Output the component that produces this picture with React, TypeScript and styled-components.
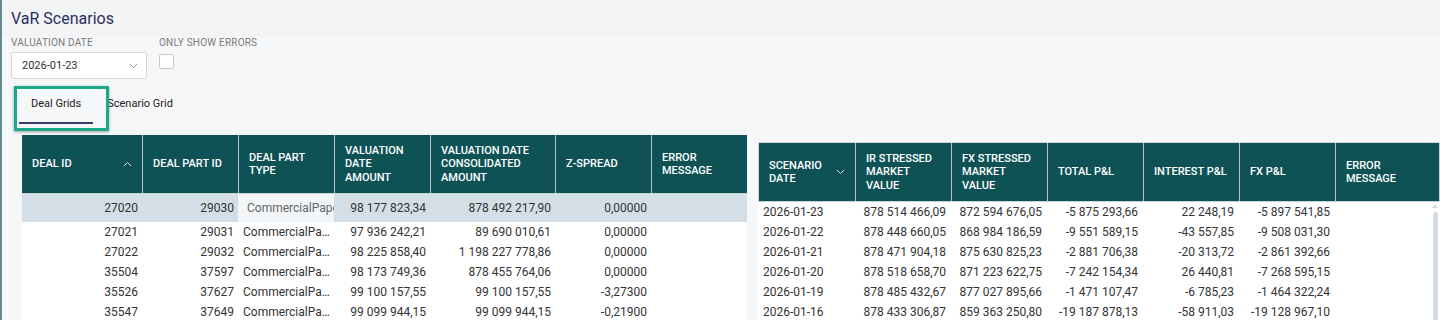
import React from "react";
import styled, { createGlobalStyle } from "styled-components";

const GlobalStyle = createGlobalStyle`
  html, body {
    margin: 0;
    padding: 0;
    height: 100%;
    overflow: hidden;
    background: #f6f7f9;
  }
  body {
    font-family: Roboto, "Liberation Sans", Arial, sans-serif;
    color: #333;
  }
`;

const Page = styled.div`
  min-height: 320px;
  border-left: 2px solid #5e8c91;
  background: #f6f7f9;
  display: flex;
  flex-direction: column;
  & > * {
    flex-shrink: 0;
  }
`;
const TitleBar = styled.div`
  height: 37px;
  background: #f3f4f6;
  padding: 0 9px;
  display: flex;
  align-items: center;
`;
const Title = styled.h1`
  margin: 0;
  font-size: 16px;
  font-weight: 400;
  color: #2c2e5e;
`;
const Filters = styled.div`
  display: flex;
  gap: 12px;
  padding: 1px 9px 0;
`;
const Field = styled.div`
  display: flex;
  flex-direction: column;
  gap: 4px;
`;
const Label = styled.label`
  font-size: 10px;
  line-height: 10px;
  color: #7a7a7a;
  text-transform: uppercase;
  letter-spacing: 0.2px;
`;
const Select = styled.div`
  width: 136px;
  height: 27px;
  box-sizing: border-box;
  background: #fff;
  border: 1px solid #d9d9d9;
  border-radius: 2px;
  display: flex;
  align-items: center;
  justify-content: space-between;
  padding: 0 8px 0 10px;
  font-size: 11px;
  color: #333;
`;
const Checkbox = styled.span`
  width: 15px;
  height: 15px;
  box-sizing: border-box;
  border: 1px solid #c9c9c9;
  border-radius: 2px;
  background: #fff;
  margin-top: 2px;
`;

const TabBar = styled.div`
  position: relative;
  display: flex;
  gap: 2px;
  padding: 10px 0 0 17px;
`;
const Tab = styled.button<{ $active?: boolean }>`
  all: unset;
  font-family: Roboto, "Liberation Sans", Arial, sans-serif;
  font-size: 11px;
  line-height: 13px;
  color: #222;
  padding: 8px 12px 12px;
  border-bottom: 2px solid ${(p) => (p.$active ? "#3a3b6b" : "transparent")};
  cursor: pointer;
`;
const FocusMark = styled.div`
  position: absolute;
  left: 12px;
  top: 7px;
  width: 95px;
  height: 45px;
  box-sizing: border-box;
  border: 3px solid #1ba98a;
  box-shadow: 0 1px 3px rgba(0, 0, 0, 0.35);
  pointer-events: none;
`;

const Grids = styled.div`
  display: flex;
  align-items: flex-start;
  gap: 11px;
  margin-top: 11px;
  padding-left: 20px;
`;
const Grid = styled.div<{ $offset?: number }>`
  display: flex;
  flex-direction: column;
  margin-top: ${(p) => p.$offset ?? 0}px;
`;
const HeaderRow = styled.div<{ $cols: string; $framed?: boolean }>`
  display: grid;
  grid-template-columns: ${(p) => p.$cols};
  height: 59px;
  box-sizing: border-box;
  background: #0e5256;
  border-bottom: 1px solid #c6d2d4;
  ${(p) =>
    p.$framed &&
    `border-top: 1px solid #cfd5da; border-left: 1px solid #cfd5da; border-right: 1px solid #cfd5da; height: 60px;`}
`;
const HeadCell = styled.div<{ $first?: boolean }>`
  display: flex;
  align-items: center;
  justify-content: space-between;
  padding: 0 10px;
  color: #fff;
  font-size: 11px;
  font-weight: 500;
  line-height: 13.5px;
  white-space: pre-line;
  border-left: ${(p) => (p.$first ? "none" : "1px solid #b3c5c7")};
`;
const Body = styled.div`
  display: flex;
  background: #fff;
`;
const Rows = styled.div`
  display: flex;
  flex-direction: column;
`;
const Row = styled.div<{ $cols: string; $selected?: boolean; $tall?: boolean }>`
  display: grid;
  grid-template-columns: ${(p) => p.$cols};
  height: ${(p) => (p.$tall ? 28 : 20)}px;
  background: ${(p) => (p.$selected ? "#d3dee6" : "#fff")};
`;
const Cell = styled.div<{ $align?: "left" | "right" }>`
  align-self: center;
  font-size: 12px;
  line-height: 20px;
  color: #333;
  padding: ${(p) => (p.$align === "right" ? "0 4px 0 2px" : "0 4px 0 5px")};
  text-align: ${(p) => p.$align ?? "left"};
  overflow: hidden;
  white-space: nowrap;
  text-overflow: ellipsis;
`;
const EditCell = styled.div`
  align-self: stretch;
  display: flex;
  align-items: center;
  background: #f3f6f9;
  color: #666;
  font-size: 12px;
  padding-left: 9px;
  overflow: hidden;
  white-space: nowrap;
`;
const ScrollTrack = styled.div`
  width: 10px;
  display: flex;
  flex-direction: column;
  align-items: center;
  padding-top: 2px;
  gap: 4px;
`;
const ScrollArrow = styled.span`
  width: 0;
  height: 0;
  border-left: 3px solid transparent;
  border-right: 3px solid transparent;
  border-bottom: 4px solid #d3dce4;
`;
const ScrollThumb = styled.span`
  width: 5px;
  height: 200px;
  border-radius: 3px;
  background: #d3dce4;
`;

const Chevron = ({ up, color }: { up?: boolean; color: string }) => (
  <svg width="9" height="6" viewBox="0 0 9 6">
    <polyline
      points={up ? "1,5 4.5,1.5 8,5" : "1,1 4.5,4.5 8,1"}
      fill="none"
      stroke={color}
      strokeWidth="1"
    />
  </svg>
);

type Col = { title: string; align: "left" | "right"; sort?: "up" | "down" };

const dealCols = "120px 96px 96px 96px 125px 96px 96px";
const dealHeaders: Col[] = [
  { title: "DEAL ID", align: "right", sort: "up" },
  { title: "DEAL PART ID", align: "right" },
  { title: "DEAL PART\nTYPE", align: "left" },
  { title: "VALUATION\nDATE\nAMOUNT", align: "right" },
  { title: "VALUATION DATE\nCONSOLIDATED\nAMOUNT", align: "right" },
  { title: "Z-SPREAD", align: "right" },
  { title: "ERROR\nMESSAGE", align: "left" },
];
const dealRows = [
  ["27020", "29030", "CommercialPaper", "98 177 823,34", "878 492 217,90", "0,00000", ""],
  ["27021", "29031", "CommercialPaper", "97 936 242,21", "89 690 010,61", "0,00000", ""],
  ["27022", "29032", "CommercialPaper", "98 225 858,40", "1 198 227 778,86", "0,00000", ""],
  ["35504", "37597", "CommercialPaper", "98 173 749,36", "878 455 764,06", "0,00000", ""],
  ["35526", "37627", "CommercialPaper", "99 100 157,55", "99 100 157,55", "-3,27300", ""],
  ["35547", "37649", "CommercialPaper", "99 099 944,15", "99 099 944,15", "-0,21900", ""],
];

const scenCols = "96px 96px 96px 96px 96px 96px 96px";
const scenHeaders: Col[] = [
  { title: "SCENARIO\nDATE", align: "left", sort: "down" },
  { title: "IR STRESSED\nMARKET\nVALUE", align: "right" },
  { title: "FX STRESSED\nMARKET\nVALUE", align: "right" },
  { title: "TOTAL P&L", align: "right" },
  { title: "INTEREST P&L", align: "right" },
  { title: "FX P&L", align: "right" },
  { title: "ERROR\nMESSAGE", align: "left" },
];
const scenRows = [
  ["2026-01-23", "878 514 466,09", "872 594 676,05", "-5 875 293,66", "22 248,19", "-5 897 541,85", ""],
  ["2026-01-22", "878 448 660,05", "868 984 186,59", "-9 551 589,15", "-43 557,85", "-9 508 031,30", ""],
  ["2026-01-21", "878 471 904,18", "875 630 825,23", "-2 881 706,38", "-20 313,72", "-2 861 392,66", ""],
  ["2026-01-20", "878 518 658,70", "871 223 622,75", "-7 242 154,34", "26 440,81", "-7 268 595,15", ""],
  ["2026-01-19", "878 485 432,67", "877 027 895,66", "-1 471 107,47", "-6 785,23", "-1 464 322,24", ""],
  ["2026-01-16", "878 433 306,87", "859 363 250,80", "-19 187 878,13", "-58 911,03", "-19 128 967,10", ""],
];

const Header = ({ cols, headers, framed }: { cols: string; headers: Col[]; framed?: boolean }) => (
  <HeaderRow $cols={cols} $framed={framed}>
    {headers.map((h, i) => (
      <HeadCell key={h.title} $first={i === 0}>
        <span>{h.title}</span>
        {h.sort && <Chevron up={h.sort === "up"} color="#dfe8e9" />}
      </HeadCell>
    ))}
  </HeaderRow>
);

export default function App() {
  return (
    <>
      <GlobalStyle />
      <Page>
        <TitleBar>
          <Title>VaR Scenarios</Title>
        </TitleBar>
        <Filters>
          <Field>
            <Label>Valuation Date</Label>
            <Select>
              <span>2026-01-23</span>
              <Chevron color="#9a9a9a" />
            </Select>
          </Field>
          <Field>
            <Label>Only Show Errors</Label>
            <Checkbox />
          </Field>
        </Filters>
        <TabBar>
          <Tab $active>Deal Grids</Tab>
          <Tab>Scenario Grid</Tab>
          <FocusMark />
        </TabBar>
        <Grids>
          <Grid>
            <Header cols={dealCols} headers={dealHeaders} />
            <Body>
              <Rows>
                {dealRows.map((r, ri) => (
                  <Row key={r[0]} $cols={dealCols} $selected={ri === 0} $tall={ri === 0}>
                    {r.map((v, ci) =>
                      ri === 0 && ci === 2 ? (
                        <EditCell key={ci}>{v}</EditCell>
                      ) : (
                        <Cell key={ci} $align={dealHeaders[ci].align}>
                          {v}
                        </Cell>
                      )
                    )}
                  </Row>
                ))}
              </Rows>
            </Body>
          </Grid>
          <Grid $offset={7}>
            <Header cols={scenCols} headers={scenHeaders} framed />
            <Body>
              <Rows>
                {scenRows.map((r) => (
                  <Row key={r[0]} $cols={scenCols}>
                    {r.map((v, ci) => (
                      <Cell key={ci} $align={scenHeaders[ci].align}>
                        {v}
                      </Cell>
                    ))}
                  </Row>
                ))}
              </Rows>
              <ScrollTrack>
                <ScrollArrow />
                <ScrollThumb />
              </ScrollTrack>
            </Body>
          </Grid>
        </Grids>
      </Page>
    </>
  );
}
